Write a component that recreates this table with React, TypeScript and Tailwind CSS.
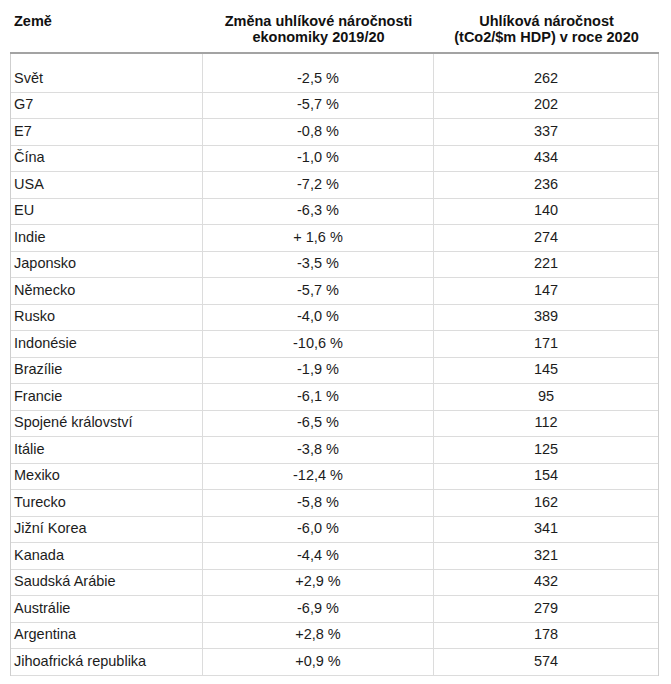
import React from 'react';

const rows: [string, string, string][] = [
  ["Svět", "-2,5 %", "262"],
  ["G7", "-5,7 %", "202"],
  ["E7", "-0,8 %", "337"],
  ["Čína", "-1,0 %", "434"],
  ["USA", "-7,2 %", "236"],
  ["EU", "-6,3 %", "140"],
  ["Indie", "+ 1,6 %", "274"],
  ["Japonsko", "-3,5 %", "221"],
  ["Německo", "-5,7 %", "147"],
  ["Rusko", "-4,0 %", "389"],
  ["Indonésie", "-10,6 %", "171"],
  ["Brazílie", "-1,9 %", "145"],
  ["Francie", "-6,1 %", "95"],
  ["Spojené království", "-6,5 %", "112"],
  ["Itálie", "-3,8 %", "125"],
  ["Mexiko", "-12,4 %", "154"],
  ["Turecko", "-5,8 %", "162"],
  ["Jižní Korea", "-6,0 %", "341"],
  ["Kanada", "-4,4 %", "321"],
  ["Saudská Arábie", "+2,9 %", "432"],
  ["Austrálie", "-6,9 %", "279"],
  ["Argentina", "+2,8 %", "178"],
  ["Jihoafrická republika", "+0,9 %", "574"],
];

const App = () => {
  return (
    <div className="w-[671px] h-[684px] bg-white font-['Liberation_Sans',Arial,sans-serif] text-[#1c1c1c]">
      <div className="ml-[10px] w-[649px]">
        {/* Header */}
        <div className="grid grid-cols-[193px_231px_225px] h-[54px] border-b-2 border-[#a3a3a3] pt-[13px] text-[14.5px] font-bold leading-[16px] text-[#111]">
          <div className="pl-[4px]">Země</div>
          <div className="text-center">
            Změna uhlíkové náročnosti
            <br />
            ekonomiky 2019/20
          </div>
          <div className="text-center">
            Uhlíková náročnost
            <br />
            (tCo2/$m HDP) v roce 2020
          </div>
        </div>

        {/* Body */}
        <div className="border-x border-[#cfcfcf] text-[14.5px]">
          {rows.map((row, i) => {
            const pad = i === 0 ? 'pt-[12px]' : '';
            return (
              <div
                key={i}
                className={`grid grid-cols-[192px_231px_224px] border-b border-[#dcdcdc] ${
                  i === 0 ? 'h-[38.5px]' : 'h-[26.5px]'
                }`}
              >
                <div className={`flex items-center pl-[3px] border-r border-[#dcdcdc] ${pad}`}>{row[0]}</div>
                <div className={`flex items-center justify-center border-r border-[#dcdcdc] ${pad}`}>{row[1]}</div>
                <div className={`flex items-center justify-center ${pad}`}>{row[2]}</div>
              </div>
            );
          })}
        </div>
      </div>
    </div>
  );
};

export default App;
